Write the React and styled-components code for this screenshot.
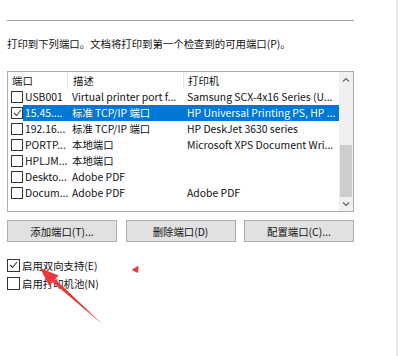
import React from 'react';
import styled, { createGlobalStyle } from 'styled-components';

const GlobalStyle = createGlobalStyle`
	html, body {
		margin: 0;
		padding: 0;
		background: #ffffff;
	}
	body {
		font-family: 'Noto Sans CJK SC', 'Noto Sans', sans-serif;
		font-size: 10.4px;
		color: #111;
	}
`;

const ports = [
	{ port: 'USB001', desc: 'Virtual printer port f...', printer: 'Samsung SCX-4x16 Series (U...' },
	{ port: '15.45....', desc: '标准 TCP/IP 端口', printer: 'HP Universal Printing PS, HP ...', checked: true, selected: true },
	{ port: '192.16...', desc: '标准 TCP/IP 端口', printer: 'HP DeskJet 3630 series' },
	{ port: 'PORTP...', desc: '本地端口', printer: 'Microsoft XPS Document Wri...' },
	{ port: 'HPLJM...', desc: '本地端口', printer: '' },
	{ port: 'Deskto...', desc: 'Adobe PDF', printer: '' },
	{ port: 'Docum...', desc: 'Adobe PDF', printer: 'Adobe PDF' },
];

const CheckMark = ({ color = '#333' }) => (
	<svg width='9' height='8' viewBox='0 0 9 8'>
		<polyline points='1,4 3.5,6.5 8,1' fill='none' stroke={color} strokeWidth='1.1' />
	</svg>
);

const Chevron = ({ up }) => (
	<svg width='8' height='5' viewBox='0 0 8 5'>
		<polyline
			points={up ? '1,4.5 4,1.5 7,4.5' : '1,0.5 4,3.5 7,0.5'}
			fill='none'
			stroke='#606060'
			strokeWidth='1.1'
		/>
	</svg>
);

const App = () => {
	return (
		<Page>
			<GlobalStyle />
			<Content>
				<Rule />
				<Description>打印到下列端口。文档将打印到第一个检查到的可用端口(P)。</Description>
				<ListBox>
					<Table>
						<HeaderRow>
							<HeadCell $w={59} $pad={4}>端口</HeadCell>
							<HeadCell $w={116} $pad={5} $divider>描述</HeadCell>
							<HeadCell $w={156} $pad={4} $divider>打印机</HeadCell>
						</HeaderRow>
						{ports.map((p) => (
							<Row key={p.port}>
								<BoxCell>
									<SmallBox>{p.checked && <CheckMark color='#444' />}</SmallBox>
								</BoxCell>
								<RowBody $selected={p.selected}>
									<Cell $w={44} $pad={2}>{p.port}</Cell>
									<Cell $w={116} $pad={5}>{p.desc}</Cell>
									<Cell $w={156} $pad={4}>{p.printer}</Cell>
								</RowBody>
							</Row>
						))}
					</Table>
					<ScrollBar>
						<ScrollArrow>
							<Chevron up />
						</ScrollArrow>
						<Track>
							<Thumb />
						</Track>
						<ScrollArrow>
							<Chevron />
						</ScrollArrow>
					</ScrollBar>
				</ListBox>
				<ButtonRow>
					<Button>添加端口(T)...</Button>
					<Button>删除端口(D)</Button>
					<Button>配置端口(C)...</Button>
				</ButtonRow>
				<Options>
					<Option>
						<Box>
							<CheckMark />
						</Box>
						<span>启用双向支持(E)</span>
					</Option>
					<Option>
						<Box />
						<span>启用打印机池(N)</span>
					</Option>
				</Options>
			</Content>
			<Annotation width='400' height='356' viewBox='0 0 400 356'>
				<polygon
					points='103.6,325.2 102.8,324.4 52.6,282.2 49.2,286 40,268 58.6,275.6 55.2,279.2'
					fill='#e83a3a'
				/>
				<polygon points='131.5,270 138.5,265.5 138,273' fill='#e83a3a' />
			</Annotation>
		</Page>
	);
};

const Page = styled.div`
	position: relative;
	width: 396px;
	height: 356px;
	border-right: 2px solid #e9e9e9;
	overflow: hidden;
`;

const Content = styled.div`
	width: 347px;
	padding: 20px 0 0 7px;
`;

const Rule = styled.div`
	height: 1px;
	background: #a0a0a0;
`;

const Description = styled.div`
	margin-top: 15px;
	line-height: 16px;
	white-space: nowrap;
`;

const ListBox = styled.div`
	margin-top: 19px;
	height: 139px;
	border: 1px solid #adadad;
	display: flex;
	overflow: hidden;
`;

const Table = styled.div`
	flex: 1;
	display: flex;
	flex-direction: column;
`;

const HeaderRow = styled.div`
	display: flex;
	height: 17px;
	align-items: stretch;
`;

const HeadCell = styled.div`
	width: ${(p) => p.$w}px;
	padding-left: ${(p) => p.$pad}px;
	box-sizing: border-box;
	line-height: 17px;
	border-left: ${(p) => (p.$divider ? '1px solid #e5e5e5' : 'none')};
	white-space: nowrap;
`;

const Row = styled.div`
	display: flex;
	height: 16px;
`;

const BoxCell = styled.div`
	width: 15px;
	display: flex;
	align-items: center;
	padding-left: 3px;
	box-sizing: border-box;
`;

const SmallBox = styled.div`
	width: 10px;
	height: 10px;
	border: 1px solid #333;
	background: #fff;
	display: flex;
	align-items: center;
	justify-content: center;
`;

const RowBody = styled.div`
	display: flex;
	flex: 1;
	background: ${(p) => (p.$selected ? '#0078d7' : 'transparent')};
	color: ${(p) => (p.$selected ? '#ffffff' : 'inherit')};
`;

const Cell = styled.div`
	width: ${(p) => p.$w}px;
	padding-left: ${(p) => p.$pad}px;
	box-sizing: border-box;
	line-height: 16px;
	white-space: nowrap;
`;

const ScrollBar = styled.div`
	width: 15px;
	background: #f0f0f0;
	display: flex;
	flex-direction: column;
`;

const ScrollArrow = styled.div`
	height: 14px;
	display: flex;
	align-items: center;
	justify-content: center;
`;

const Track = styled.div`
	flex: 1;
	padding: 0 1px;
`;

const Thumb = styled.div`
	margin-top: 59px;
	height: 52px;
	background: #cdcdcd;
`;

const ButtonRow = styled.div`
	margin-top: 8px;
	display: grid;
	grid-template-columns: 110px 110px 110px;
	justify-content: space-between;
`;

const Button = styled.div`
	height: 22px;
	box-sizing: border-box;
	border: 1px solid #adadad;
	background: #e1e1e1;
	display: flex;
	align-items: center;
	justify-content: center;
	white-space: nowrap;
`;

const Options = styled.div`
	margin-top: 14px;
	display: flex;
	flex-direction: column;
`;

const Option = styled.div`
	height: 18px;
	display: flex;
	align-items: center;
	gap: 2px;
	white-space: nowrap;
`;

const Box = styled.div`
	width: 11px;
	height: 11px;
	border: 1px solid #333;
	display: flex;
	align-items: center;
	justify-content: center;
`;

const Annotation = styled.svg`
	position: absolute;
	left: 0;
	top: 0;
	pointer-events: none;
`;

export default App;
